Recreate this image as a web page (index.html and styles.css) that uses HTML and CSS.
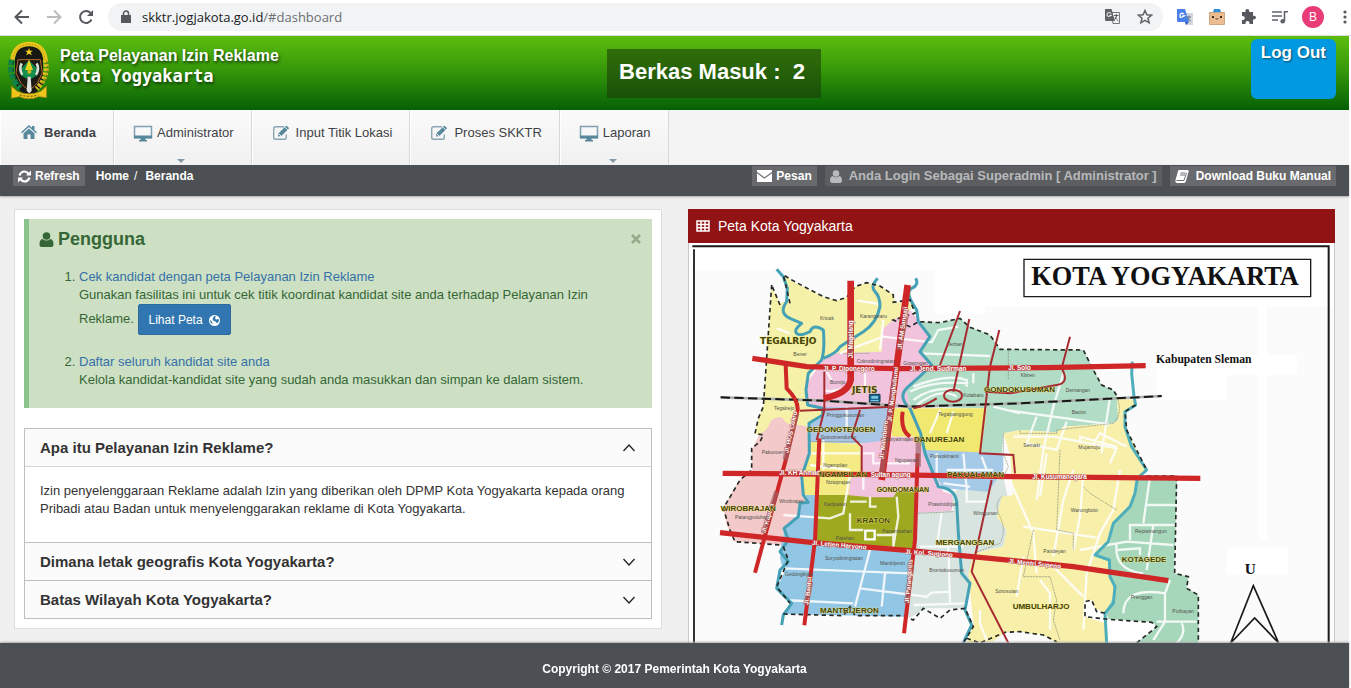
FILE: index.html
```html
<!DOCTYPE html>
<html lang="id">
<head>
<meta charset="utf-8">
<title>Peta Pelayanan Izin Reklame</title>
<link rel="stylesheet" href="styles.css">
</head>
<body>
<svg class="defs" aria-hidden="true">
  <symbol id="monitor" viewBox="0 0 20 17"><path fill="none" stroke="#7fa0b0" stroke-width="1.5" d="M1.5 1.5h17v11h-17z"/><path fill="#57889c" d="M1 10.500h18v3H12.500V15H14v1.500H6V15h1.500v-1.500H1z"/></symbol>
  <symbol id="edit" viewBox="0 0 18 16"><path fill="none" stroke="#8aa6b5" stroke-width="1.400" d="M12 1.700H3.500Q1.700 1.700 1.700 3.500v9Q1.700 14.300 3.500 14.300h9q1.800 0 1.800-1.800V9.500"/><path fill="#57889c" d="M6 11.500l.6-3.300 7.300-7.300q.5-.5 1 0l1.800 1.800q.5.500 0 1L9.300 11z"/><path stroke="#f5f5f5" d="M13 2.200l2.600 2.600M7 9l2 2"/></symbol>
  <symbol id="user" viewBox="0 0 14 15"><circle cx="7" cy="4" r="3.800"/><path d="M3 7q4 3 8 0 3 .8 3 5 0 3-2 3H2q-2 0-2-3 0-4.200 3-5z"/></symbol>
  <symbol id="chevron" viewBox="0 0 14 10"><path fill="none" stroke="#222" stroke-width="1.300" d="M1.500 2l5.500 6 5.500-6"/></symbol>
</svg>

<div class="browser">
  <button class="tool" aria-label="Back"><svg width="16" height="16" viewBox="0 0 16 16"><path fill="none" stroke="#55585c" stroke-width="2" d="M15 8H2M8 1.500L1.500 8 8 14.500"/></svg></button>
  <button class="tool" aria-label="Forward"><svg width="16" height="16" viewBox="0 0 16 16"><path fill="none" stroke="#bbbdc0" stroke-width="2" d="M1 8h13M8 1.500L14.500 8 8 14.500"/></svg></button>
  <button class="tool" aria-label="Reload"><svg width="16" height="16" viewBox="0 0 16 16"><path fill="none" stroke="#55585c" stroke-width="2" d="M13.500 10.500A6 6 0 1 1 12.500 3.900"/><path fill="#55585c" d="M15 1v6H9z"/></svg></button>
  <div class="address">
    <svg width="10" height="13" viewBox="0 0 10 13"><path fill="#55585c" d="M0 5h10v8H0z"/><path fill="none" stroke="#55585c" stroke-width="1.500" d="M2.500 5V3.500a2.500 2.500 0 0 1 5 0V5"/></svg>
    <p class="url">skktr.jogjakota.go.id<span>/#dashboard</span></p>
    <svg width="15" height="15" viewBox="0 0 15 15"><path fill="#f1f3f4" stroke="#777" d="M6 3.500h8.500v11H8z"/><path fill="#5f6368" d="M0 0h6.500l3.500 12H1q-1 0-1-1z"/><path fill="none" stroke="#fff" d="M6.200 4.200Q2 2.500 2 5.700T6.500 6.300H4.500"/><path fill="none" stroke="#5f6368" d="M9 6.500h4.500M11.500 5v1.500q0 3-2 4M10 8q1 2 3.500 4"/></svg>
    <svg class="star" width="16" height="16" viewBox="0 0 16 16"><path fill="none" stroke="#5f6368" stroke-width="1.500" d="M8 1.500l1.900 4.300 4.700.4-3.600 3 1.100 4.600L8 11.400l-4.100 2.400L5 9.200l-3.600-3 4.700-.4z"/></svg>
  </div>
  <div class="extensions">
    <svg width="16" height="16" viewBox="0 0 16 16"><path fill="#d4d7dc" d="M6 4h10v12H9z"/><path fill="#4a80ec" d="M0 0h8l4 13H1q-1 0-1-1z"/><path fill="none" stroke="#fff" stroke-width="1.300" d="M7 5Q3.500 3 3 6.500T7.200 7H5.200"/><path stroke="#5f7a94" fill="none" d="M9.500 8H14M12 6.500V8q0 3-2 4M11 9q1 3 3 3"/><path fill="#2b57c0" d="M8 13h4l-3 3z"/></svg>
    <svg width="16" height="16" viewBox="0 0 16 16"><path fill="#2d91e0" d="M4 3l1-3h6l1 3z"/><path fill="#ecbd91" stroke="#cda482" d="M.5 3.500h15v12H.5z"/><circle cx="4" cy="8" r="1"/><circle cx="12" cy="8" r="1"/><path fill="none" stroke="#222" stroke-width=".8" d="M6.500 9.500q.8 1.200 1.500 0 .7 1.200 1.500 0"/></svg>
    <svg width="15" height="15" viewBox="0 0 15 15"><path fill="#55585c" d="M1 3h3.500Q4 0 6.300 0T8.200 3H12v3.700q3-.4 3 1.800t-3 2V15H8.500q.2-3-2-3t-2 3H1v-4q2.800 0 2.800-2T1 7z"/></svg>
    <svg width="16" height="14" viewBox="0 0 16 14"><path stroke="#5f6368" stroke-width="1.600" d="M0 2h10M0 6h10M0 10h6"/><path fill="none" stroke="#5f6368" stroke-width="1.600" d="M16 1.800h-3.500V11"/><circle cx="10.700" cy="11.200" r="2.300" fill="#5f6368"/></svg>
    <span class="avatar">B</span>
    <svg width="4" height="14" viewBox="0 0 4 14" fill="#55585c"><circle cx="2" cy="2" r="1.600"/><circle cx="2" cy="7" r="1.600"/><circle cx="2" cy="12" r="1.600"/></svg>
  </div>
</div>

<div class="page">
  <header class="header">
    <svg class="crest" width="42" height="60" viewBox="0 0 126 180">
      <path fill="#171715" d="M63 14c-26 0-40 13-42 40v76l20 24 22 8 22-8 20-24V54C103 27 89 14 63 14z"/>
      <path fill="none" stroke="#e7c51b" stroke-width="13" d="M13 58C16 26 34 9 63 9s47 17 50 49"/>
      <path fill="none" stroke="#a9820f" stroke-width="2" stroke-dasharray="5 4" d="M15 56C18 28 36 10 63 10s45 18 48 46"/>
      <path fill="none" stroke="#128244" stroke-width="18" stroke-dasharray="17 4" d="M12 56Q0 104 36 142"/>
      <path fill="none" stroke="#0b5a36" stroke-width="4" stroke-dasharray="12 9" d="M17 60Q8 104 42 138"/>
      <path fill="none" stroke="#d9bb1c" stroke-width="15" stroke-dasharray="9 4" d="M111 56q14 48-25 88"/>
      <path fill="none" stroke="#6f7a1a" stroke-width="4" stroke-dasharray="7 6" d="M117 62q10 44-20 72"/>
      <path fill="#1d1b12" stroke="#b56a2b" stroke-width="3" d="M30 56h67l6 40-15 30-25 24-25-24-14-30z"/>
      <path fill="#13874d" d="M63 58L36 86l4 18 17 10 6-13 6 13 17-10 5-18z"/>
      <path fill="none" stroke="#d9ded8" stroke-width="8" d="M41 67q-9 18 2 34M86 67q9 18-2 34"/>
      <path fill="#e9d21c" d="M63 55l12 32H51z"/><path fill="#17924c" d="M44 94q20-15 39 0l-10 13H54z"/>
      <circle cx="64" cy="92" r="6" fill="#d6b51c"/>
      <path fill="#e0e2e0" d="M59 107h9l3 43-7 7-8-7z"/>
      <path fill="#f4cc1f" d="M63 21l3 8h9l-7 5 3 9-8-5-8 5 3-9-7-5h9z"/>
      <path fill="#efc51c" stroke="#8b7414" stroke-width="2" d="M10 135l18 16q35 15 70 0l18-16v35l-24-3q-29 13-58 0l-24 5z"/>
      <path fill="none" stroke="#8c7615" stroke-width="4" stroke-dasharray="7 4" d="M35 161q28 10 56 0"/>
    </svg>
    <h1 class="brand">Peta Pelayanan Izin Reklame <span>Kota Yogyakarta</span></h1>
    <div class="inbox">Berkas Masuk : &nbsp;2</div>
    <a class="logout" href="#logout">Log Out</a>
  </header>

  <nav class="nav">
    <a class="nav-item active" href="#dashboard"><svg width="18" height="14" viewBox="-1 0 18 14"><path fill="#57889c" d="M8 0l3 2.700V1h2.500v4L16 7.300l-1 1-7-6.200-7 6.200-1-1zM8 3.500l5.500 4.800V14H9.500V9.500h-3V14h-4V8.300z"/></svg>Beranda</a>
    <a class="nav-item wide" href="#administrator"><svg width="20" height="17"><use href="#monitor"/></svg>Administrator<i class="caret"></i></a>
    <a class="nav-item" href="#input"><svg width="18" height="16"><use href="#edit"/></svg>Input Titik Lokasi</a>
    <a class="nav-item" href="#proses"><svg width="18" height="16"><use href="#edit"/></svg>Proses SKKTR</a>
    <a class="nav-item wide" href="#laporan"><svg width="20" height="17"><use href="#monitor"/></svg>Laporan<i class="caret"></i></a>
  </nav>

  <div class="ribbon">
    <button class="chip"><svg width="13" height="13" viewBox="0 0 13 13"><path fill="none" stroke="#fff" stroke-width="2.200" d="M1.500 5.500Q3 1.500 6.500 1.500q2.500 0 4 2.300M11.500 7.500q-1.500 4-5 4-2.500 0-4-2.300"/><path fill="#fff" d="M13 .5v5H8zM0 12.500v-5h5z"/></svg>Refresh</button>
    <a class="crumb" href="#home">Home</a><span class="slash">/</span><a class="crumb" href="#dashboard">Beranda</a>
    <div class="ribbon-right">
      <button class="chip"><svg width="15" height="12" viewBox="0 0 15 12"><path fill="#fff" d="M0 0h15v12H0z"/><path fill="none" stroke="#707174" stroke-width="1.200" d="M0 2.500l7.500 5.500L15 2.500"/></svg>Pesan</button>
      <button class="chip roomy" disabled><svg width="12" height="13" viewBox="0 0 14 15" fill="currentColor"><use href="#user" width="14" height="15"/></svg>Anda Login Sebagai Superadmin [ Administrator ]</button>
      <button class="chip roomy"><svg width="14" height="13" viewBox="0 0 14 13"><path fill="#fff" d="M4 0h9q1 .3.700 1.300L11 11q-.5 2-2 2H1.500Q0 12.500.5 10L3 1q.3-1 1-1z"/><path stroke="#707174" d="M5.500 3h5M5 5h5M1.500 10.500H9L11.500 3" fill="none"/></svg>Download Buku Manual</button>
    </div>
  </div>

  <main class="content">
    <section class="card">
      <div class="alert">
        <div class="alert-head"><svg width="15" height="15" fill="#356635"><use href="#user"/></svg><h2>Pengguna</h2><button class="close" aria-label="Tutup"><svg width="10" height="10" viewBox="0 0 10 10"><path stroke="#96aa8a" stroke-width="2.500" d="M1 1l8 8M9 1L1 9"/></svg></button></div>
        <ol class="tips">
          <li><a href="#cek">Cek kandidat dengan peta Pelayanan Izin Reklame</a><br>Gunakan fasilitas ini untuk cek titik koordinat kandidat site anda terhadap Pelayanan Izin Reklame. <button class="btn">Lihat Peta <svg width="11" height="11" viewBox="0 0 11 11"><circle cx="5.500" cy="5.500" r="5.500" fill="#fff"/><path fill="#3276b1" d="M5 1l2 .5-1 1.800 1 1.200 2.500-.5.500 2L8 8.500 6.500 6.500 4 5.500 3.500 4zM1 4.500l2 2.500L3.500 9.500 1.500 7.500z"/></svg></button></li>
          <li><a href="#daftar">Daftar seluruh kandidat site anda</a><br>Kelola kandidat-kandidat site yang sudah anda masukkan dan simpan ke dalam sistem.</li>
        </ol>
      </div>
      <div class="accordion">
        <h3><button class="question open" aria-expanded="true">Apa itu Pelayanan Izin Reklame?<svg width="14" height="10"><use href="#chevron"/></svg></button></h3>
        <div class="answer">Izin penyelenggaraan Reklame adalah Izin yang diberikan oleh DPMP Kota Yogyakarta kepada orang Pribadi atau Badan untuk menyelenggarakan reklame di Kota Yogyakarta.</div>
        <h3><button class="question" aria-expanded="false">Dimana letak geografis Kota Yogyakarta?<svg width="14" height="10"><use href="#chevron"/></svg></button></h3>
        <h3><button class="question" aria-expanded="false">Batas Wilayah Kota Yogyakarta?<svg width="14" height="10"><use href="#chevron"/></svg></button></h3>
      </div>
    </section>

    <section class="map-panel">
      <h2 class="map-title"><svg width="14" height="12" viewBox="0 0 14 12"><path fill="none" stroke="#fff" stroke-width="1.500" d="M1 1h12v10H1zM1 4.500h12M1 7.800h12M5 1v10M9 1v10"/></svg>Peta Kota Yogyakarta</h2>
      <svg class="map" viewBox="27 9 1935 1200" role="img" aria-label="Peta Kota Yogyakarta">
        <path fill="#fff" d="M27 9h1935v1200H27z"/>
        <path fill="#fbfbfb" d="M45 90h720v130h150v-20h1050v1010H45z"/>
        <path fill="#fff" d="M1430 345h420v60h-210v75h-210zM1640 923h184v80h-184zM1735 200h25v700h-25z"/>
        <!-- districts -->
        <path fill="#f6f1a8" d="M275 140L300 190 330 180 310 105 340 125 430 172 470 182 500 172 525 140 560 128 600 138 640 165 645 187 700 190 690 215 640 240 610 265 605 335 540 342 470 345 430 360 400 390 380 430 380 500 430 505 430 530 385 550 360 580 250 590 225 580 235 535 250 500z"/>
        <path fill="#f1c3dd" d="M430 360L470 340 605 335 610 265 640 240 690 210 715 240 750 290 720 340 755 375 680 440 690 505 385 500 380 430z"/>
        <path fill="#b1dcc5" d="M715 245L780 248 840 235 870 262 930 285 960 328 1210 330 1265 435 1300 450 1310 470 1315 540 1300 550 1150 560 1130 577 1020 570 970 580 965 645 900 640 920 505 690 500 680 450 755 375 720 340 755 290z"/>
        <path fill="#f1e86f" d="M640 505H920L903 640 730 632 710 590 635 590z"/>
        <path fill="#f1c3dd" d="M545 590L710 590 735 640 790 755 825 765 815 812 710 820 570 772 500 768 515 700 545 700z"/>
        <path fill="#aac6e6" d="M430 500L640 505 630 600 545 610 388 610 385 555 430 530z"/>
        <path fill="#f4eb84" d="M388 605L540 612 545 700 515 700 505 768 370 766 360 700 390 650z"/>
        <path fill="#f4c9c9" d="M240 580Q265 570 270 545 285 530 305 532L320 550 385 560 390 640 360 720 372 765 385 788 360 830 312 865 310 915 165 905 140 855 130 805 165 740 180 720 215 690 215 630z"/>
        <path fill="#92c6e5" d="M375 765H412L408 915 310 905 312 860 360 820 365 790 390 787zM305 905L702 930 685 1130 305 1122 335 1090 290 1045 312 1000 300 955z"/>
        <path fill="#9fa91f" d="M412 765H500L570 772 640 772 650 755 712 757 705 928 408 912z"/>
        <path fill="#d8e4df" d="M712 818L820 812 815 760 930 700 965 690 985 780 950 830 980 870 970 920 880 940 870 1000 860 1105 740 1105 685 1135 702 930z"/>
        <path fill="#a5cae8" d="M730 630L970 640 970 690 925 755 790 745 760 700z"/>
        <path fill="#f7efaa" d="M970 580L1020 570 1130 577 1150 560 1300 550 1315 540 1310 470 1360 480 1367 500 1335 515 1340 570 1400 690 1370 720 1355 800 1300 850 1290 910 1245 945 1290 965 1290 1010 1310 1040 1280 1120 1235 1100 1215 1085 1217 1130 1280 1150V1209H1130L1090 1185 1020 1175 975 1177 940 1204 860 1209 880 1150 865 1000 880 940 970 920 980 870 950 830 965 770 1000 765 990 645z"/>
        <path fill="#a6d7bb" d="M1400 705H1492L1482 1000 1525 1010 1520 1045 1555 1065 1555 1209H1370L1430 1160 1415 1147 1285 1138 1275 1120 1305 1060 1290 1000 1290 965 1245 945 1290 910 1300 850 1355 800 1370 720z"/>
        <path fill="#fff" d="M1217 1085L1235 1080 1250 1115 1280 1120 1285 1138 1415 1147 1430 1160 1370 1209H1285L1280 1150 1215 1130z"/>
        <!-- minor streets -->
        <g fill="none" stroke="#fff" stroke-width="7" opacity=".85">
          <path d="M530 182L600 192M480 340L530 320 610 290 755 307 775 270 835 260M290 265L330 280M440 395L455 420M500 500V560M430 450Q460 460 500 440M555 400V440M610 240L600 330M720 340L930 348M700 440Q800 400 860 420V440M690 455Q760 420 865 430M700 480Q760 435 840 450M710 495Q780 440 830 470M780 510L750 580M820 515L800 580M880 400V430M940 500L1020 520M990 512L1290 553M1150 400L1120 500 1090 630 1070 780M1290 470L1265 640M1070 530L1040 610 1130 630 1160 545M1000 590H1120L1310 625 1290 670"/>
          <path d="M390 640H540M390 675L510 690M430 600V690M510 700L490 820 450 835 310 825M510 785H560M570 770V800H590M650 770L655 830 640 920M510 820V870H550M590 885H640M640 880V930M570 930L525 1100M310 985L690 1000M540 1045L740 1070 755 1058 810 1055M615 1000L605 1100M310 1080L520 1090M700 1095L860 1090M785 820L770 920M720 920H850M805 920L810 1090M770 640V720M850 640L860 745M800 690H940M790 730L870 740M905 650L920 690M860 745V785H920M550 640H580V670H690M550 700V750"/>
          <path d="M980 700L1060 880 1070 1000M1100 640L1080 770M1030 860L1250 893M1180 690L1150 780 1120 950M1210 700L1200 830 1180 930M1320 690L1300 810 1260 880 1220 1000 1210 1170M1010 1070L1030 950M1080 1020L1110 1060 1110 1170M1100 960L1210 1070M1200 930L1340 905 1480 915M1410 710L1390 850M1400 795H1490M1350 900V855H1490M1420 855L1400 990M1310 910Q1300 990 1390 1000M1310 930L1380 925V945M1470 1020L1455 1060Q1330 1040 1330 1120M1455 1060V1145L1420 1200M1430 1145H1550M1505 1150Q1520 1180 1490 1209M900 1110V1150L920 1200M1240 610L1260 580 1340 620M1200 610V590L1310 620"/>
        </g>
        <path fill="#9fa91f" stroke="#fff" stroke-width="7" d="M556 872H584V898H556z"/>
        <g fill="none" stroke="#8c927a" stroke-width="2" stroke-dasharray="7 2"><path d="M388 605H540M490 340H570M970 580V640L985 680 965 720M820 815L712 820M965 770Q940 790 960 830T960 910L880 940M1020 570V580H1130V570L1300 550Q1330 520 1310 470M1140 630L1130 870 1180 880V930M1060 870L1030 1010H1110L1130 1080 1120 1140 1140 1200M1210 740L1230 760 1310 810M985 330V420"/></g>
        <!-- rivers -->
        <g fill="none" stroke="#45a1b5" stroke-width="9" stroke-linejoin="round">
          <path d="M290 88L310 110 322 145 320 185Q295 220 330 235T365 250Q340 270 350 280T390 275Q400 250 430 270Q435 330 425 360L385 400 378 450 383 495 428 505V525L387 550 388 640 365 710 370 765 385 787 360 790 355 830 312 865 325 900 300 935 325 965 300 990 290 1045 335 1090 310 1125 305 1155"/>
          <path d="M593 115Q570 140 585 155T600 200Q590 250 550 275T480 320Q470 340 430 355M707 115Q718 135 695 145T710 210L715 245 750 290 720 335 755 375Q720 410 685 440T690 505L722 580 735 640 775 740Q825 745 830 785L835 880 845 1000 870 1030 855 1110 875 1155 850 1209"/>
          <path d="M1357 365L1355 400 1362 470 1367 495 1335 515 1335 560 1355 620 1400 690 1372 715 1365 760 1350 800 1300 850 1285 905 1245 945 1288 960 1290 1010 1305 1040 1300 1090 1275 1120 1280 1209" stroke="#4faebb"/>
        </g>
        <g fill="none" stroke="#252a25" stroke-width="5" stroke-dasharray="13 10">
          <path d="M330 190L310 105 350 128 430 170 470 182 500 172 525 140 560 128 600 138 640 165V187L690 180 705 220 640 240 690 260 715 245 780 248 840 235 870 262 930 285 960 328 1210 330 1240 390 1265 435 1300 450 1312 470M1367 495L1335 515 1340 570 1365 620 1400 690M275 135L250 500 235 535 225 580 250 585 240 605 215 625 215 690 180 720 130 805 150 870 165 905 300 915M300 195L277 140M310 920L325 960 290 1040 330 1090M310 1122L490 1127 510 1100 525 1127H670L700 1140 730 1105 780 1135 810 1110 855 1105 880 1160 850 1209M860 1195L900 1209 975 1177 1020 1175 1090 1185 1130 1205M1400 708H1490L1484 1000 1525 1010 1520 1045 1555 1065V1209M1370 1209L1430 1160 1415 1147 1285 1138 1215 1130V1085L1235 1080 1250 1115 1280 1120"/>
        </g>
        <path fill="none" stroke="#aab1aa" stroke-width="8" d="M122 472L430 482 690 500 1020 490 1445 468"/>
        <path fill="none" stroke="#171717" stroke-width="6" stroke-dasharray="28 13" d="M122 472L430 482 690 500 1020 490 1445 468"/>
        <!-- main roads -->
        <g fill="none" stroke="#a72b30" stroke-width="6"><path d="M433 395V510L410 600M840 213L780 375M868 237L820 455M958 270L930 380 900 640 1000 645 1005 700M1170 290L1145 385Q1170 430 1130 435L990 460 915 455M700 505Q730 500 770 475M540 510L515 590 545 620V700M935 720L875 995 985 1209M360 512L640 500"/><ellipse cx="819" cy="467" rx="27" ry="18"/></g>
        <g fill="none" stroke="#cf2727">
          <path stroke-width="20" d="M512 122V420Q505 460 432 475M683 135L650 380 605 720"/>
          <path stroke-width="16" d="M217 355L380 380 650 386 1100 383 1397 377M128 700L600 704 1000 710 1561 715M120 878L400 908 690 932 1000 962 1180 980 1465 1022"/>
          <path stroke-width="12" d="M317 375L320 445Q355 480 353 510L320 650 225 998M418 595L405 900 373 1156M713 640L705 900 672 1180M668 515Q660 570 690 590"/>
        </g>
        <g fill="none" stroke="#9d6165" stroke-width="16" opacity=".65"><path d="M350 520L315 660M290 755L250 880M512 265V350M680 220L657 330M645 410L605 700M715 590V680M392 1025L378 1095M695 975L680 1090"/></g>
        <g class="road-label">
          <text x="430" y="394">Jl. P. Diponegoro</text><text x="690" y="393">Jl. Jend. Sudirman</text><text x="985" y="391">Jl. Solo</text>
          <text x="298" y="706">Jl. KH Ahmad</text><text x="572" y="711">Sultan agung</text><text x="1057" y="717">Jl. Kusumanegara</text>
          <text transform="translate(395 914) rotate(5)">Jl. Letjen Haryono</text><text transform="translate(675 941) rotate(4)">Jl. Kol. Sugiono</text><text transform="translate(985 969) rotate(6)">Jl. Mentri Supeno</text>
          <text transform="translate(518 355) rotate(-90)">Jl. Magelang</text><text transform="translate(665 328) rotate(-82)">Jl. AM Sangaji</text><text transform="translate(635 545) rotate(-83)">Jl. P. Mangkubumi</text><text transform="translate(610 658) rotate(-83)">Jl. Malioboro</text><text transform="translate(325 640) rotate(-78)">Jl. HOS Cokro</text><text transform="translate(256 880) rotate(-73)">Jl. Kapten</text><text transform="translate(385 1095) rotate(-83)">Jl. Bantul</text><text transform="translate(687 1090) rotate(-85)">Jl. Parangtritis</text>
        </g>
        <g class="village">
          <text x="420" y="239">Kricak</text><text x="540" y="233">Karangwaru</text><text x="340" y="349">Bener</text><text x="530" y="370">Cokrodiningratan</text><text x="670" y="375">Gowongan</text><text x="450" y="433">Bumijo</text><text x="282" y="511">Tegalrejo</text><text x="440" y="530">Pringgokusuman</text><text x="422" y="597">Sosromenduran</text><text x="616" y="603">Suryatmajan</text><text x="775" y="528">Tegalpanggung</text><text x="802" y="319">Terban</text><text x="850" y="472">Kotabaru</text><text x="1022" y="411">Klitren</text><text x="1157" y="455">Demangan</text><text x="1175" y="523">Baciro</text><text x="1030" y="622">Semaki</text><text x="1195" y="627">Mujamuju</text>
          <text x="245" y="643">Pakuncen</text><text x="430" y="681">Ngampilan</text><text x="438" y="731">Notoprajan</text><text x="645" y="665">Ngupasan</text><text x="750" y="655">Purwokinanti</text><text x="298" y="790">Wirobrajan</text><text x="165" y="838">Patangpuluhan</text><text x="432" y="797">Kadipaten</text><text x="607" y="880">Panembahan</text><text x="467" y="900">Patehan</text><text x="745" y="797">Prawirodirjan</text><text x="880" y="825">Wirogunan</text><text x="435" y="961">Suryodiningratan</text><text x="600" y="975">Mantrijeron</text><text x="315" y="1007">Gedongkiwo</text><text x="748" y="996">Brontokusuman</text><text x="946" y="1059">Sorosutan</text><text x="1172" y="815">Warungboto</text><text x="1090" y="939">Pandeyan</text><text x="1365" y="878">Rejowinangun</text><text x="1352" y="1077">Prenggan</text><text x="1477" y="1120">Purbayan</text>
        </g>
        <g class="district">
          <text class="broad" x="240" y="312">TEGALREJO</text><text class="broad" x="516" y="460">JETIS</text><text x="380" y="576">GEDONGTENGEN</text><text x="702" y="605">DANUREJAN</text><text x="912" y="457">GONDOKUSUMAN</text><text x="416" y="711">NGAMPILAN</text><text x="802" y="711">PAKUALAMAN</text><text class="narrow" x="590" y="755">GONDOMANAN</text><text x="122" y="812">WIROBRAJAN</text><text x="530" y="848">KRATON</text><text x="767" y="916">MERGANGSAN</text><text x="420" y="1119">MANTRIJERON</text><text x="998" y="1108">UMBULHARJO</text><text x="1325" y="966">KOTAGEDE</text>
        </g>
        <path fill="#14668f" stroke="#163c54" stroke-width="3" d="M568 463H600V486H568z"/><path fill="#7ac5db" d="M574 468h20v8h-20zM572 480h24v4h-24z"/>
        <path fill="none" stroke="#191919" stroke-width="6" d="M37 19H1946V1209"/><path stroke="#333" stroke-width="6" d="M42 28V1209"/>
        <path fill="#fff" stroke="#191919" stroke-width="4" d="M1032 58H1892V170H1032z"/>
        <text class="city" x="1054" y="135">KOTA YOGYAKARTA</text>
        <text class="regency" x="1428" y="368">Kabupaten Sleman</text>
        <text class="north" x="1694" y="1001">U</text>
        <path fill="none" stroke="#191919" stroke-width="5" d="M1652 1209L1720 1037 1796 1209 1724 1134z"/>
      </svg>
    </section>
  </main>
</div>
<footer class="footer">Copyright © 2017 Pemerintah Kota Yogyakarta</footer>
</body>
</html>
```
FILE: styles.css
```css
* { box-sizing: border-box; }
body { margin: 0; height: 100vh; overflow: hidden; background: #fff; color: #333; font: 13px/18px "Liberation Sans", Arial, sans-serif; }
h1, h2, h3, p { margin: 0; }
button { font: inherit; color: inherit; border: 0; padding: 0; background: none; cursor: pointer; }
a { color: #3670a8; text-decoration: none; }
svg { flex: none; }
.defs { position: absolute; width: 0; height: 0; }

.browser { display: flex; align-items: center; gap: 16px; height: 36px; padding: 0 4px 2px 14px; border-bottom: 1px solid #dcdedc; }
.tool { display: flex; }
.address { flex: 1; display: flex; align-items: center; gap: 11px; height: 28px; margin-left: -2px; padding: 0 10px 0 13px; border-radius: 14px; background: #f1f3f4; }
.url { flex: 1; color: #202124; font: 13px/20px "Open Sans", "Noto Sans", sans-serif; }
.url span { color: #6b6f73; }
.star { margin-left: 6px; }
.extensions { display: flex; align-items: center; gap: 16px; margin-left: -2px; }
.avatar { width: 22px; height: 22px; margin: 0 3px 0 -2px; border-radius: 50%; background: #e93b77; color: #fff; font-size: 12px; line-height: 22px; text-align: center; }

.page { margin-right: 2px; min-height: calc(100vh - 36px); background: #f0f0f0; }
.header { display: grid; grid-template-columns: 42px 541fr auto 507fr; column-gap: 8px; align-items: start; height: 74px; padding: 3px 13px 0 8px; background: linear-gradient(#5cbd0e, #379909 45%, #066006); color: #fff; font-weight: bold; }
.crest { margin-top: 2px; }
.brand { padding: 7px 0 0 2px; font-size: 16px; line-height: 20px; text-shadow: 1px 2px 3px #123c08; }
.brand span { display: block; font-family: "DejaVu Sans Mono", monospace; font-size: 17px; }
.inbox { margin-top: 10px; padding: 0 16px 4px 12px; background: rgba(27, 55, 9, .55); font-size: 22px; line-height: 45px; }
.logout { justify-self: end; height: 60px; padding: 0 10px; border-radius: 6px; background: #0099e2; color: #fff; font-size: 17px; line-height: 27px; text-shadow: 1px 1px 2px #064e70; }

.nav { display: flex; height: 55px; background: #f4f4f4; }
.nav-item { position: relative; display: flex; gap: 6px; padding: 13px 17px 0 20px; border-right: 1px solid #d8d8d8; background: linear-gradient(#fbfbfb, #f0f0f0); box-shadow: inset 1px 0 #fff; color: #3e4246; line-height: 20px; }
.nav-item svg { margin-top: 2px; }
.nav-item.active { font-weight: bold; }
.nav-item.wide { gap: 4px; padding-left: 19px; }
.caret { position: absolute; bottom: 2px; left: calc(50% - 5px); border: 4px solid transparent; border-top-color: #8799a3; border-bottom: 0; }

.ribbon { display: flex; align-items: flex-start; height: 31px; padding: 1px 13px 0; background: #4c4f53; box-shadow: 0 1px 2px #aaa; color: #fff; font-size: 12px; font-weight: bold; }
.chip { display: flex; align-items: center; gap: 4px; height: 20px; padding: 0 5px; background: #696a6d; color: #fff; font-weight: bold; }
.chip.roomy { gap: 7px; }
.chip:disabled { background: #5c5e62; color: #b8b9ba; font-size: 13px; }
.crumb, .slash { color: #fff; line-height: 20px; }
.crumb { margin-left: 11px; }
.slash { margin-left: 5px; font-weight: normal; }
.slash + .crumb { margin-left: 8px; }
.ribbon-right { display: flex; gap: 8px; margin-left: auto; }

.content { display: grid; grid-template-columns: 648fr 647fr; gap: 26px; align-items: start; padding: 13px 14px 45px; }
.card { padding: 9px; border: 1px solid #ddd; background: #fff; }
.alert { margin-bottom: 20px; padding: 10px 11px 19px 10px; border-left: 5px solid #8ac38b; background: #cde0c4; color: #356635; }
.alert-head { display: flex; align-items: center; gap: 4px; }
.alert-head h2 { flex: 1; font-size: 18px; line-height: 20px; }
.close { display: flex; }
.tips { margin: 19px 45px 0 0; padding-left: 40px; }
.tips li + li { margin-top: 18px; }
.btn { height: 31px; padding: 0 10px; border: 1px solid #2c699d; border-radius: 2px; background: #3276b1; color: #fff; font-size: 12px; vertical-align: middle; }
.btn svg { margin-left: 3px; vertical-align: middle; }

.accordion { border: 1px solid #bfbfbf; }
.accordion h3 + h3, .answer + h3 { border-top: 1px solid #bfbfbf; }
.question { display: flex; align-items: center; justify-content: space-between; width: 100%; height: 37px; padding: 0 15px; background: #fbfbfb; font-size: 15px; font-weight: bold; text-align: left; }
.question.open svg { transform: rotate(180deg); }
.answer { padding: 15px 15px 24px; border-top: 1px solid #d5d5d5; }

.map-panel { border: 1px solid #c8c8c8; border-top: 0; background: #fff; }
.map-title { display: flex; align-items: center; gap: 8px; height: 34px; margin: 0 -1px; padding: 0 8px; background: #911313; color: #fff; font-size: 14px; font-weight: normal; }
.map { display: block; width: 100%; }
.map text { font-family: "Liberation Sans", Arial, sans-serif; }
.map .road-label { fill: #fff; stroke: #a03a3a; stroke-width: 2px; paint-order: stroke; font-size: 19px; font-weight: bold; }
.map .village { fill: #50504a; font-size: 15px; }
.map .district { fill: #45430c; stroke: #f1ea78; stroke-width: 2px; paint-order: stroke; font-size: 24px; font-weight: bold; }
.map .district .broad { font-family: "DejaVu Sans", sans-serif; font-size: 27px; }
.map .district .narrow { font-size: 21px; }
.map .city, .map .regency, .map .north { fill: #111; font-family: "Liberation Serif", serif; font-weight: bold; }
.map .city { font-size: 79px; }
.map .regency { font-size: 35px; }
.map .north { font-size: 46px; }

.footer { position: fixed; left: 0; right: 2px; bottom: 0; height: 45px; padding-top: 4px; background: #4c4f53; box-shadow: 0 -1px 2px #aaa; color: #fff; font-size: 12px; font-weight: bold; line-height: 45px; text-align: center; }
```
